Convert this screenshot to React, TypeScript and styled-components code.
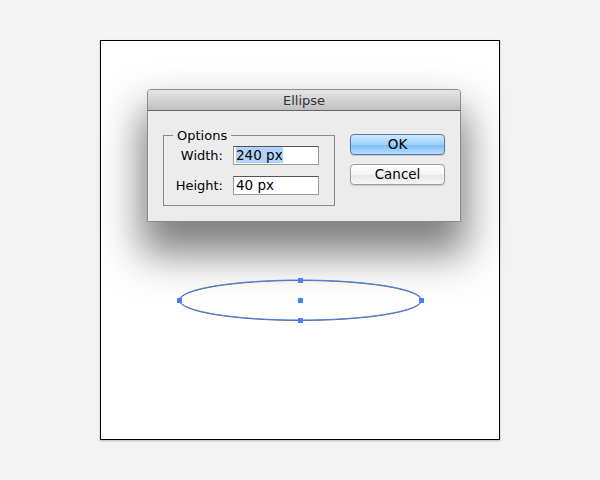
import styled, { createGlobalStyle } from "styled-components"

const GlobalStyle = createGlobalStyle`
  html, body {
    margin: 0;
    padding: 0;
    background: #f3f3f3;
  }
  * {
    box-sizing: border-box;
  }
`

const App = () => {
  return (
    <>
      <GlobalStyle />
      <Page>
        <Artboard>
          <Dialog>
            <TitleBar>Ellipse</TitleBar>
            <DialogBody>
              <Options>
                <Legend>Options</Legend>
                <FieldGrid>
                  <FieldLabel>Width:</FieldLabel>
                  <FieldInput>
                    <Selected>240 px</Selected>
                  </FieldInput>
                  <FieldLabel>Height:</FieldLabel>
                  <FieldInput>40 px</FieldInput>
                </FieldGrid>
              </Options>
              <ButtonColumn>
                <Button $primary>OK</Button>
                <Button>Cancel</Button>
              </ButtonColumn>
            </DialogBody>
          </Dialog>
          <EllipseCanvas width="250" height="50" viewBox="0 0 250 50">
            <ellipse cx="125.5" cy="25.5" rx="121" ry="20" fill="none" stroke="#666" strokeWidth="1" />
            <ellipse cx="125.5" cy="25" rx="121" ry="20" fill="none" stroke="#4a7ef2" strokeWidth="1" />
            <Handle x="123" y="3" width="5" height="5" />
            <Handle x="123" y="23" width="5" height="5" />
            <Handle x="123" y="43" width="5" height="5" />
            <Handle x="2" y="23" width="5" height="5" />
            <Handle x="244" y="23" width="5" height="5" />
          </EllipseCanvas>
        </Artboard>
      </Page>
    </>
  )
}
export default App

const Page = styled.div`
  width: 600px;
  height: 480px;
  padding-top: 40px;
  display: flex;
  justify-content: center;
`

const Artboard = styled.div`
  width: 400px;
  height: 400px;
  background: #fff;
  border: 1px solid #000;
  box-shadow: 0 1px 2px rgba(0, 0, 0, 0.25);
  display: flex;
  flex-direction: column;
  align-items: flex-start;
  padding: 48px 0 0 46px;
`

const Dialog = styled.div`
  width: 314px;
  border: 1px solid #8c8c8c;
  border-radius: 4px 4px 0 0;
  background: #ececec;
  box-shadow: 0 26px 40px 6px rgba(0, 0, 0, 0.5);
  font-family: "DejaVu Sans", "Liberation Sans", sans-serif;
  color: #000;
`

const TitleBar = styled.div`
  height: 21px;
  border-bottom: 1px solid #666;
  border-radius: 3px 3px 0 0;
  background: linear-gradient(#e6e6e6, #c0c0c0);
  text-align: center;
  font-size: 13px;
  line-height: 21px;
  color: #333;
`

const DialogBody = styled.div`
  height: 110px;
  display: flex;
  align-items: flex-start;
  gap: 15px;
  padding: 17px 0 0 15px;
`

const Options = styled.fieldset`
  margin: 0;
  padding: 3px 15px 10px 9px;
  border: 1px solid #8a8a8a;
  width: 172px;
`

const Legend = styled.legend`
  padding: 0 4px;
  font-size: 13px;
  line-height: 15px;
`

const FieldGrid = styled.div`
  display: grid;
  grid-template-columns: 50px 86px;
  column-gap: 10px;
  row-gap: 11px;
  align-items: center;
`

const FieldLabel = styled.div`
  text-align: right;
  font-size: 13px;
  white-space: nowrap;
`

const FieldInput = styled.div`
  height: 19px;
  background: #fff;
  border: 1px solid #9a9a9a;
  border-top-color: #555;
  padding: 0 2px;
  font-size: 13.5px;
  line-height: 17px;
`

const Selected = styled.span`
  background: #b2d3f8;
`

const ButtonColumn = styled.div`
  margin-top: 6px;
  display: flex;
  flex-direction: column;
  gap: 9px;
`

const Button = styled.div<{ $primary?: boolean }>`
  width: 95px;
  height: 21px;
  border-radius: 4px;
  border: 1px solid ${(p) => (p.$primary ? "#5578b3" : "#9c9c9c")};
  background: ${(p) =>
    p.$primary
      ? "linear-gradient(#d0e8ff 0%, #9ccffb 50%, #7fbef7 55%, #b5defe 100%)"
      : "linear-gradient(#ffffff 0%, #f4f4f4 50%, #e8e8e8 55%, #f6f6f6 100%)"};
  box-shadow: 0 1px 1px rgba(0, 0, 0, 0.15);
  text-align: center;
  font-size: 13.5px;
  line-height: 19px;
`

const EllipseCanvas = styled.svg`
  display: block;
  margin: 53px 0 0 28px;
`

const Handle = styled.rect`
  fill: #4a80f5;
`
